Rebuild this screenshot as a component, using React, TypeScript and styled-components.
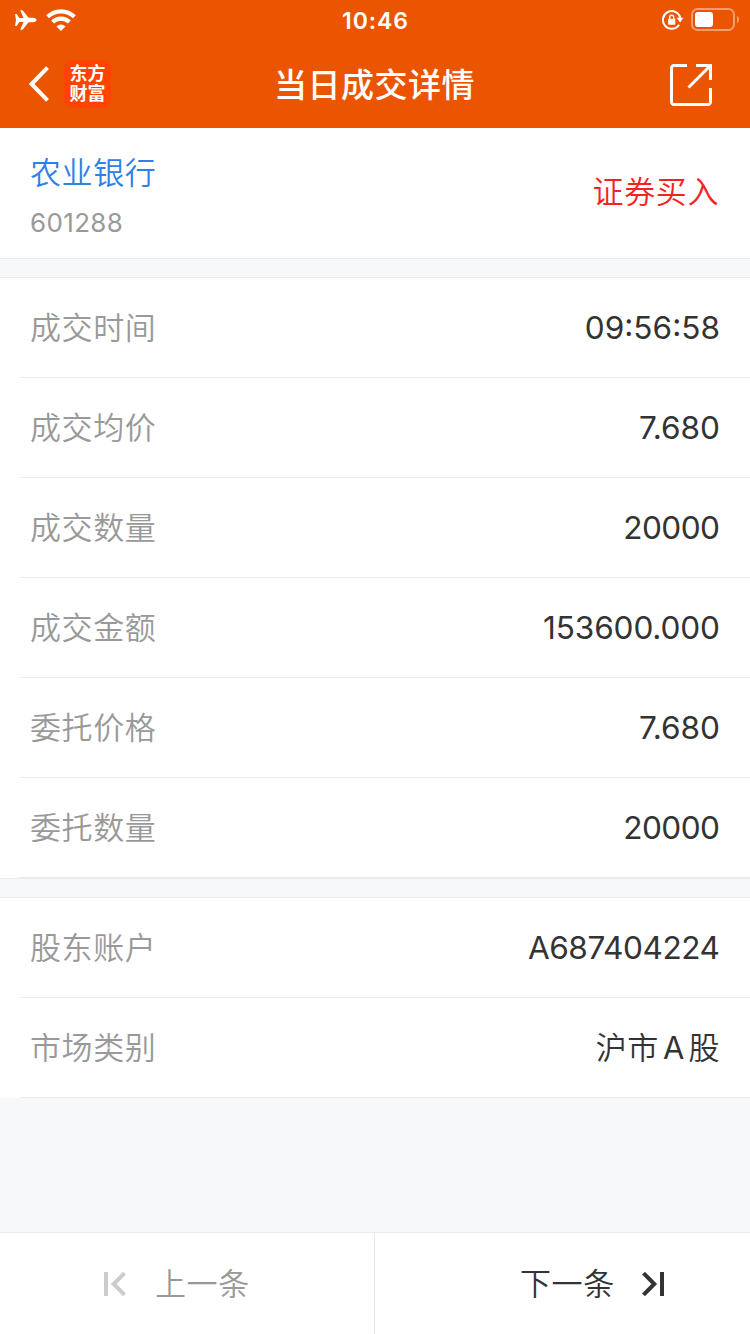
import React from "react";
import styled, { createGlobalStyle } from "styled-components";

const GlobalStyle = createGlobalStyle`
  * { box-sizing: border-box; }
  body {
    margin: 0;
    background: #f7f8fa;
    font-family: Inter, "Noto Sans CJK SC", sans-serif;
    color: #333;
  }
`;

const Screen = styled.div`
  width: 750px;
  height: 1334px;
  display: flex;
  flex-direction: column;
  overflow: hidden;
  background: #f7f8fa;
`;

const Header = styled.header`
  height: 128px;
  background: #eb5502;
  color: #fff;
`;

const Bar = styled.div<{ $height: number; $padding: string }>`
  height: ${(p) => p.$height}px;
  padding: ${(p) => p.$padding};
  display: grid;
  grid-template-columns: 1fr auto 1fr;
  align-items: center;
`;

const BarSide = styled.div<{ $end?: boolean; $gap: number }>`
  display: flex;
  align-items: center;
  justify-content: ${(p) => (p.$end ? "flex-end" : "flex-start")};
  gap: ${(p) => p.$gap}px;

  svg { display: block; }
`;

const BackButton = styled.span`
  margin-left: -8px;
`;

const ShareButton = styled.span`
  padding-top: 2px;
`;

const Clock = styled.span`
  padding-top: 2px;
  font-size: 23px;
  line-height: 38px;
  font-weight: 600;
  letter-spacing: 0.95px;
  margin-right: 4px;
`;

const Title = styled.h1`
  margin: 0;
  padding-top: 2px;
  font-size: 33px;
  line-height: 84px;
  font-weight: 500;
  letter-spacing: 0.5px;
`;

const BrandMark = styled.div`
  width: 47px;
  height: 48px;
  padding-top: 4px;
  border-radius: 9px;
  background: #ff4300;
  font-size: 18px;
  line-height: 20px;
  font-weight: 700;
  text-align: center;
`;

const Summary = styled.section`
  height: 131px;
  padding: 0 30px;
  display: flex;
  justify-content: space-between;
  align-items: center;
  background: #fff;
  border-bottom: 1px solid #e9ebed;
`;

const Stock = styled.div`
  display: flex;
  flex-direction: column;
  padding-top: 8px;
`;

const StockName = styled.span`
  font-size: 31px;
  line-height: 50px;
  letter-spacing: 0.6px;
  font-weight: 350;
  color: #2f80e7;
`;

const StockCode = styled.span`
  font-size: 26px;
  line-height: 49px;
  letter-spacing: 0.35px;
  color: #999;
`;

const Side = styled.span`
  font-size: 31px;
  line-height: 50px;
  letter-spacing: 0.6px;
  font-weight: 350;
  padding-bottom: 3px;
  margin-right: 1px;
  color: #f42323;
`;

const Group = styled.section<{ $closed?: boolean }>`
  margin-top: 18px;
  background: #fff;
  border-top: 1px solid #e9ebed;
  border-bottom: ${(p) => (p.$closed ? "1px solid #e9ebed" : "none")};
`;

const Row = styled.div`
  height: 100px;
  margin-left: 20px;
  padding: 0 30px 0 10px;
  display: flex;
  justify-content: space-between;
  align-items: center;
  border-bottom: 1px solid #ebebeb;
`;

const Label = styled.span`
  font-size: 31px;
  line-height: 50px;
  letter-spacing: 0.6px;
  font-weight: 350;
  color: #999;
`;

const Value = styled.span<{ $spacing: number; $cjk?: boolean }>`
  padding-top: ${(p) => (p.$cjk ? 0 : 1)}px;
  font-size: ${(p) => (p.$cjk ? 31 : 31.6)}px;
  font-weight: ${(p) => (p.$cjk ? 350 : 400)};
  line-height: 50px;
  letter-spacing: ${(p) => p.$spacing}px;
  margin-right: ${(p) => (p.$cjk ? 0 : -p.$spacing)}px;
`;

const Latin = styled.span`
  margin: 0 3.5px 0 4px;
  font-weight: 380;
`;

const Pager = styled.footer`
  height: 102px;
  margin-top: auto;
  display: flex;
  background: #fff;
  border-top: 1px solid #e9e9eb;
`;

const PagerButton = styled.button<{ $muted?: boolean }>`
  width: 375px;
  padding: ${(p) => (p.$muted ? "0 0 0 103px" : "0 0 0 145px")};
  display: flex;
  align-items: center;
  gap: ${(p) => (p.$muted ? 28 : 26)}px;
  border: 0;
  border-right: ${(p) => (p.$muted ? "1px solid #e9e9eb" : "none")};
  background: none;
  font: inherit;
  font-size: 31px;
  font-weight: 350;
  letter-spacing: 0.6px;
  color: ${(p) => (p.$muted ? "#999" : "#333")};
`;

const PagerText = styled.span`
  padding-bottom: 4px;
`;

const AirplaneIcon = () => (
  <svg width="22" height="20" viewBox="0 0 22 20" fill="#fff">
    <path d="M0 4h1.700L4.300 7.900 8.600 8 5.200.2h2.400L13.600 7.700H18c2.200 0 3.500 1.300 3.500 2.300s-1.300 2.300-3.500 2.300h-4.400L7.600 19.700H5.200L8.600 12l-4.300.1L1.700 16H0l1-6z" />
  </svg>
);

const WifiIcon = () => (
  <svg width="30" height="22" viewBox="0 0 30 22" fill="none" stroke="#fff" strokeWidth="4.100">
    <path d="M1.600 7.800a19.200 19.200 0 0 1 26.800 0" />
    <path d="M6.600 13a12.200 12.200 0 0 1 16.800 0" />
    <path d="M15 22l-4.500-4.500a6.300 6.300 0 0 1 9 0z" fill="#fff" stroke="none" />
  </svg>
);

const RotationLockIcon = () => (
  <svg width="22" height="20" viewBox="0 0 22 20">
    <path d="M17.100 14.700A8.800 8.800 0 1 1 18.300 8" fill="none" stroke="#fff" strokeWidth="2" />
    <path d="M14.600 7.800h6.800L18 12.400z" fill="#fff" />
    <rect x="6.100" y="8.700" width="7.200" height="6" rx="0.800" fill="#fff" />
    <path d="M7.700 9.400V7.300a2 2 0 0 1 4 0v2.100" fill="none" stroke="#fff" strokeWidth="1.400" />
  </svg>
);

const BatteryIcon = () => (
  <svg width="49" height="24" viewBox="0 0 49 24">
    <rect x="1" y="1" width="42" height="21" rx="5.500" fill="none" stroke="#fff" strokeOpacity="0.42" strokeWidth="2" />
    <rect x="4" y="4" width="18" height="15" rx="3" fill="#fff" />
    <path d="M46 8c1.200.4 2 1.800 2 3.500S47.200 14.600 46 15z" fill="#fff" fillOpacity="0.45" />
  </svg>
);

const BackIcon = () => (
  <svg width="20" height="36" viewBox="0 0 20 36" fill="none" stroke="#fff" strokeWidth="4">
    <path d="M18.500 1.700L2.600 18l15.900 16.300" />
  </svg>
);

const ShareIcon = () => (
  <svg width="42" height="42" viewBox="0 0 42 42" fill="none" stroke="#fff" strokeWidth="3">
    <path d="M17 1.500H4A2.500 2.500 0 0 0 1.500 4v34A2.500 2.500 0 0 0 4 40.500h34a2.500 2.500 0 0 0 2.500-2.500V24" />
    <path d="M26 1.500h14.500V16M40 2L18.500 23.500" />
  </svg>
);

const FirstIcon = () => (
  <svg width="24" height="24" viewBox="0 0 24 24" fill="none" stroke="#ccc" strokeWidth="4">
    <path d="M3 0v24M21.500 1.200L10.700 12l10.800 10.800" />
  </svg>
);

const LastIcon = () => (
  <svg width="24" height="24" viewBox="0 0 24 24" fill="none" stroke="#333" strokeWidth="4">
    <path d="M21 0v24M2.500 1.200L13.300 12 2.500 22.800" />
  </svg>
);

type Field = { label: string; value: React.ReactNode; spacing: number; cjk?: boolean };

const dealFields: Field[] = [
  { label: "成交时间", value: "09:56:58", spacing: 0 },
  { label: "成交均价", value: "7.680", spacing: -0.05 },
  { label: "成交数量", value: "20000", spacing: -0.55 },
  { label: "成交金额", value: "153600.000", spacing: -0.15 },
  { label: "委托价格", value: "7.680", spacing: -0.05 },
  { label: "委托数量", value: "20000", spacing: -0.55 },
];

const accountFields: Field[] = [
  { label: "股东账户", value: "A687404224", spacing: -0.45 },
  { label: "市场类别", value: <>沪市<Latin>A</Latin>股</>, spacing: 0.6, cjk: true },
];

const FieldRow = ({ field }: { field: Field }) => (
  <Row>
    <Label>{field.label}</Label>
    <Value $spacing={field.spacing} $cjk={field.cjk}>{field.value}</Value>
  </Row>
);

export default function App() {
  return (
    <>
      <GlobalStyle />
      <Screen>
        <Header>
          <Bar $height={40} $padding="0 10px 0 15px">
            <BarSide $gap={9}>
              <AirplaneIcon />
              <WifiIcon />
            </BarSide>
            <Clock>10:46</Clock>
            <BarSide $gap={7} $end>
              <RotationLockIcon />
              <BatteryIcon />
            </BarSide>
          </Bar>
          <Bar $height={88} $padding="0 38px 0 37px">
            <BarSide $gap={15}>
              <BackButton>
                <BackIcon />
              </BackButton>
              <BrandMark>东方<br />财富</BrandMark>
            </BarSide>
            <Title>当日成交详情</Title>
            <BarSide $gap={0} $end>
              <ShareButton>
                <ShareIcon />
              </ShareButton>
            </BarSide>
          </Bar>
        </Header>
        <Summary>
          <Stock>
            <StockName>农业银行</StockName>
            <StockCode>601288</StockCode>
          </Stock>
          <Side>证券买入</Side>
        </Summary>
        <Group $closed>
          {dealFields.map((f) => <FieldRow key={f.label} field={f} />)}
        </Group>
        <Group>
          {accountFields.map((f) => <FieldRow key={f.label} field={f} />)}
        </Group>
        <Pager>
          <PagerButton $muted>
            <FirstIcon />
            <PagerText>上一条</PagerText>
          </PagerButton>
          <PagerButton>
            <PagerText>下一条</PagerText>
            <LastIcon />
          </PagerButton>
        </Pager>
      </Screen>
    </>
  );
}
